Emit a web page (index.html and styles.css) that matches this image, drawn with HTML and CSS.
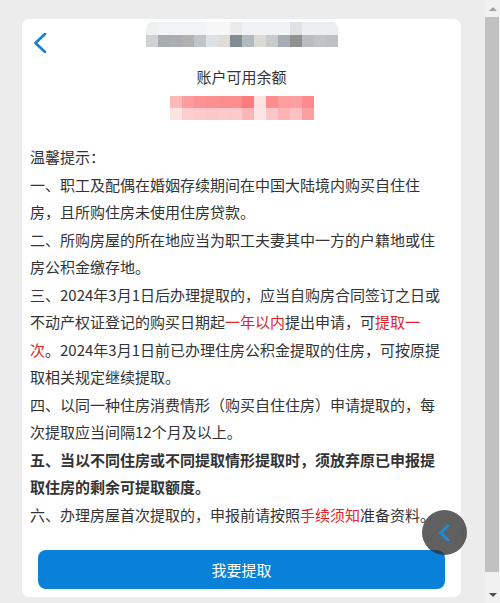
FILE: index.html
```html
<!DOCTYPE html>
<html lang="zh-CN">
<head>
<meta charset="utf-8">
<title>账户可用余额</title>
<link rel="stylesheet" href="styles.css">
</head>
<body>
<div class="page">
  <div class="card">
    <div class="header">
      <svg class="back" width="14" height="20" viewBox="0 0 14 20"><polyline points="12,1 2.5,10 12,19" fill="none" stroke="#1a7ccc" stroke-width="2.6" stroke-linecap="round" stroke-linejoin="round"/></svg>
      <div class="blur-title"><div class="bt-top"></div><div class="bt-bot"></div></div>
      <div></div>
    </div>
    <div class="label">账户可用余额</div>
    <div class="blur-amount"><div class="ba-top"></div><div class="ba-bot"></div></div>
    <div class="notes">
      <p>温馨提示：</p>
      <p>一、职工及配偶在婚姻存续期间在中国大陆境内购买自住住房，且所购住房未使用住房贷款。</p>
      <p>二、所购房屋的所在地应当为职工夫妻其中一方的户籍地或住房公积金缴存地。</p>
      <p>三、2024年3月1日后办理提取的，应当自购房合同签订之日或不动产权证登记的购买日期起<span class="red">一年以内</span>提出申请，可<span class="red">提取一次</span>。2024年3月1日前已办理住房公积金提取的住房，可按原提取相关规定继续提取。</p>
      <p>四、以同一种住房消费情形（购买自住住房）申请提取的，每次提取应当间隔12个月及以上。</p>
      <p class="bold">五、当以不同住房或不同提取情形提取时，须放弃原已申报提取住房的剩余可提取额度。</p>
      <p>六、办理房屋首次提取的，申报前请按照<span class="red">手续须知</span>准备资料。</p>
    </div>
    <button class="submit">我要提取</button>
  </div>
</div>
<div class="scrollbar">
  <div class="sb-btn"><span class="tri-up"></span></div>
  <div class="sb-thumb"></div>
  <div class="sb-track"></div>
  <div class="sb-btn"><span class="tri-down"></span></div>
</div>
<div class="float-back">
  <svg width="14" height="18" viewBox="0 0 14 18"><polyline points="11,2 3.5,9 11,16" fill="none" stroke="#1b8ee0" stroke-width="3" stroke-linecap="round" stroke-linejoin="round"/></svg>
</div>
</body>
</html>
```

FILE: styles.css
```css
html, body {
  margin: 0;
  padding: 0;
  height: 603px;
  overflow: hidden;
}
body {
  display: flex;
  background: #ececec;
  font-family: "Noto Sans CJK SC", "Microsoft YaHei", sans-serif;
  color: #333;
}
.page {
  flex: 1;
  min-width: 0;
}
.card {
  margin: 19px 24px 0 22px;
  background: #fff;
  border-radius: 7px;
  padding-bottom: 8px;
}
.header {
  display: grid;
  grid-template-columns: 1fr auto 1fr;
  align-items: start;
  height: 32px;
  padding-top: 3px;
  box-sizing: border-box;
}
.back {
  display: block;
  margin: 11px 0 0 11px;
}
.blur-title {
  width: 192px;
}
.bt-top, .bt-bot {
  height: 13px;
}
.bt-bot { height: 12px; }
.bt-top {
  background: linear-gradient(to right,
    #eeefef 0 12px, #f2f3f4 12px 60px, #f7f7f7 60px 84px,
    #e9ebed 84px 96px, #f1f2f3 96px 144px, #dfe1e2 144px 156px, #eceeef 156px 192px);
  border-radius: 6px 6px 0 0;
}
.bt-bot {
  background: linear-gradient(to right,
    #d0d1d2 0 12px, #a6acb1 12px 24px, #a9aeb2 24px 36px, #b1b1b1 36px 48px,
    #c0c5c9 48px 60px, #dce1e5 60px 72px, #e0dcd7 72px 84px, #818b94 84px 96px,
    #b2bac1 96px 108px, #dcdad5 108px 120px, #c9cbcb 120px 132px, #a4adb5 132px 144px,
    #8f9193 144px 156px, #b8bdc1 156px 168px, #c0c4c8 168px 180px, #bcc1c5 180px 192px);
}
.label {
  margin-top: 15px;
  text-align: center;
  font-size: 15px;
  line-height: 22px;
}
.blur-amount {
  width: 144px;
  margin: 8px auto 0;
}
.ba-top, .ba-bot { height: 12px; }
.ba-top {
  background: linear-gradient(to right,
    #fdb8b9 0 12px, #fd9c9e 12px 24px, #fe9193 24px 36px, #fe8f91 36px 48px,
    #fd8e90 48px 60px, #fd8d8f 60px 72px, #fb7b7d 72px 84px, #fde2e2 84px 96px,
    #fd8e90 96px 108px, #fd9d9f 108px 120px, #fd9fa0 120px 132px, #fd8a8c 132px 144px);
}
.ba-bot {
  background: linear-gradient(to right,
    #fde4e3 0 12px, #fdcdce 12px 24px, #fec9ca 24px 36px, #fdc6c8 36px 48px,
    #fec9ca 48px 60px, #fdc8c9 60px 72px, #fcb6b8 72px 84px, #fde4e5 84px 96px,
    #fdc6c8 96px 108px, #fdb2b4 108px 120px, #fdc1c2 120px 132px, #fc9fa1 132px 144px);
}
.notes {
  margin-top: 23px;
  padding: 0 14px 0 8px;
  font-size: 15px;
  line-height: 27.5px;
}
.notes p {
  margin: 0;
}
.red {
  color: #e0242a;
}
.bold {
  font-weight: bold;
}
.submit {
  display: block;
  box-sizing: border-box;
  width: calc(100% - 32px);
  height: 39px;
  margin: 22px 16px 0;
  border: none;
  border-radius: 8px;
  background: #0a81d9;
  color: #fff;
  font-family: inherit;
  font-size: 15px;
  padding: 0;
}
.scrollbar {
  width: 15px;
  height: 603px;
  background: #f1f1f1;
  display: flex;
  flex-direction: column;
}
.sb-btn {
  height: 17px;
  display: flex;
  align-items: center;
  justify-content: center;
}
.tri-up {
  width: 0;
  height: 0;
  border-left: 4px solid transparent;
  border-right: 4px solid transparent;
  border-bottom: 4px solid #a3a3a3;
}
.tri-down {
  width: 0;
  height: 0;
  border-left: 4px solid transparent;
  border-right: 4px solid transparent;
  border-top: 4px solid #505050;
}
.sb-thumb {
  height: 555px;
  margin: 0 1px 0 0;
  background: #c1c1c1;
}
.sb-track {
  flex: 1;
}
.float-back {
  position: fixed;
  left: 422px;
  top: 510px;
  width: 45px;
  height: 45px;
  border-radius: 50%;
  background: rgba(48, 48, 48, 0.77);
  display: flex;
  align-items: center;
  justify-content: center;
}
.float-back svg {
  margin-left: -2px;
}
```
